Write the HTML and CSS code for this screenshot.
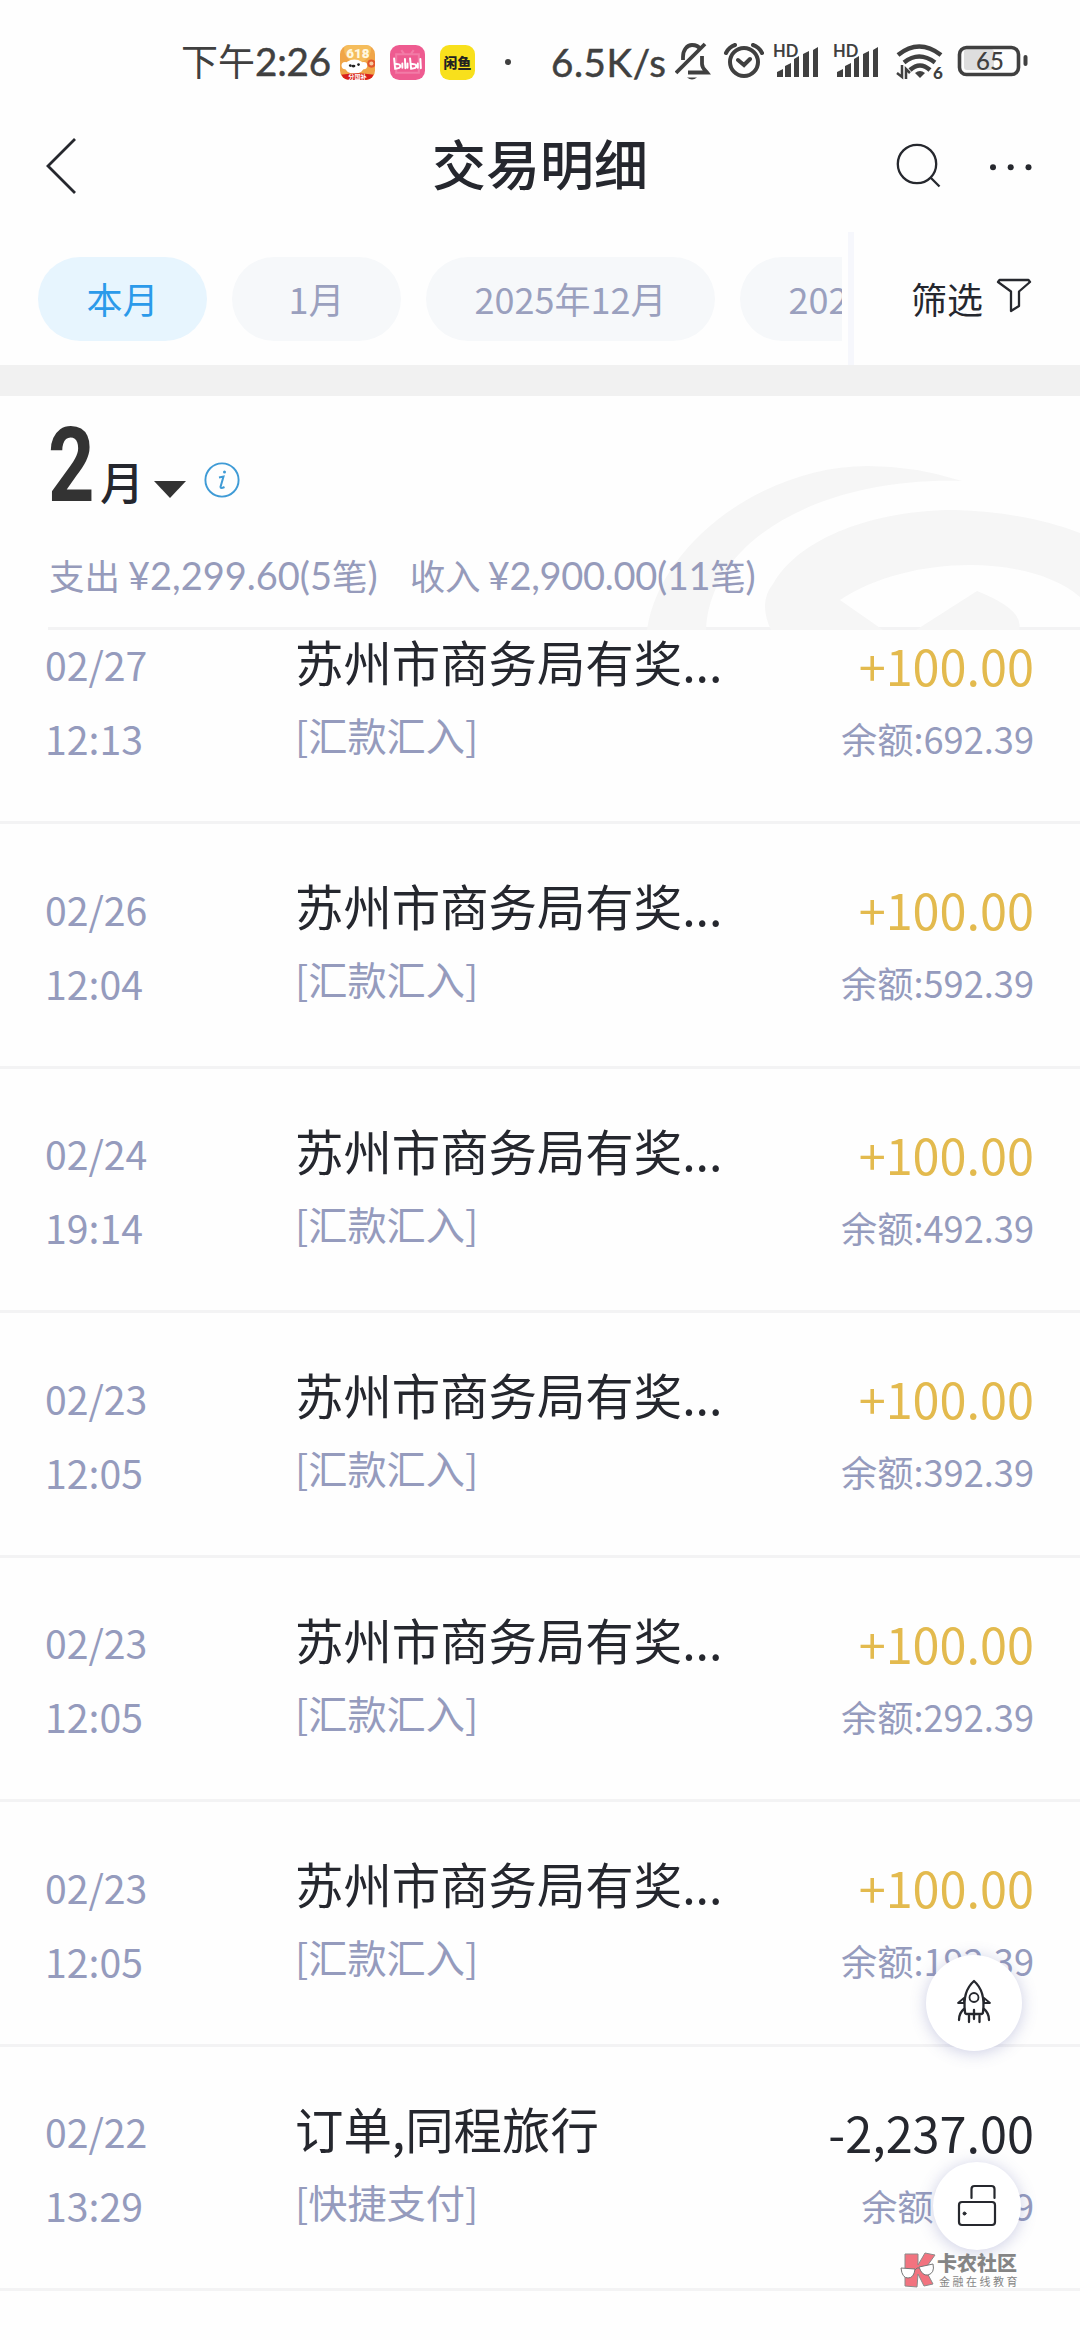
FILE: index.html
```html
<!DOCTYPE html>
<html lang="zh-CN">
<head>
<meta charset="utf-8">
<title>交易明细</title>
<link rel="stylesheet" href="styles.css">
</head>
<body>
<div class="screen">
  <div class="status">
    <span class="clock">下午<span class="clock-num">2:26</span></span>
    <svg class="app-icon" viewBox="0 0 34 34">
      <defs><clipPath id="r"><rect width="34" height="34" rx="9"/></clipPath></defs>
      <g clip-path="url(#r)">
        <rect width="34" height="34" fill="#f0a548"/>
        <circle cx="17" cy="4" r="13" fill="#f5bd5c"/>
        <text x="6" y="13" class="promo">618</text>
        <ellipse cx="14" cy="21" rx="9.500" ry="7" fill="#fff"/>
        <circle cx="5" cy="20" r="3.500" fill="#fff"/><circle cx="23" cy="20" r="3.500" fill="#fff"/>
        <circle cx="10" cy="20" r="1.300" fill="#222"/><circle cx="18" cy="19" r="1.300" fill="#222"/><ellipse cx="13" cy="20.500" rx="2" ry="1.300" fill="#222"/>
        <circle cx="30.500" cy="18" r="4" fill="#e2562c"/><circle cx="30.500" cy="18" r="2" fill="#f7c9a0"/>
        <path d="M1 29q16-3 32 0l-4 5H5z" fill="#d8201c"/>
        <text x="8" y="33.500" class="promo-sub">分国补</text>
      </g>
    </svg>
    <svg class="app-icon" viewBox="0 0 34 34">
      <rect width="34" height="34" rx="9" fill="#ee5b90"/>
      <path d="M11 5l3 4M23 5l-3 4M6 9h22v18H6z" fill="none" stroke="#f27ba6" stroke-width="2"/>
      <g fill="none" stroke="#fff" stroke-width="1.900" stroke-linecap="round">
        <path d="M4 13l1 10q5 0 5-2.500T5 18.500M12 18v4M14.500 13.500l.5 9M17 18v4M19.500 13l1 10q5 0 5-2.500t-5-2M27 18v4M29.500 13.500l.5 9"/>
      </g>
    </svg>
    <svg class="app-icon" viewBox="0 0 34 34">
      <rect width="34" height="34" rx="9" fill="#f8e01c"/>
      <text x="3.500" y="22.500" class="fish">闲鱼</text>
    </svg>
    <i class="dot"></i>
    <span class="speed">6.5K/s</span>
    <svg class="status-icons" viewBox="0 0 360 50" fill="none" stroke="#404040" stroke-width="4">
      <g stroke-width="3.800">
        <path d="M8 24v-3c0-7 4-12 9-12 4 0 7 2 8 4M27 20v8c0 4 3 6 5 8.500H13"/>
        <path d="M1 37L30 8"/>
        <path d="M12 41.500h10q-5 4-10 0z" fill="#404040" stroke="none"/>
      </g>
      <circle cx="69" cy="26" r="14"/><path d="M63 24l6 5 6-6M51 17q3-6 9-8M87 17q-3-6-9-8" stroke-linecap="round"/>
      <g fill="#404040" stroke="none">
        <text x="98" y="21" class="hd">HD</text>
        <path d="M102 41v-5l6-3v8zM110 41V30l6-3v14zM119 41V23l5-3v21zM128 41V18l6-3v26zM138 41V14l5-3v30z"/>
        <text x="158" y="21" class="hd">HD</text>
        <path d="M162 41v-5l6-3v8zM170 41V30l6-3v14zM179 41V23l5-3v21zM188 41V18l6-3v26zM198 41V14l5-3v30z"/>
      </g>
      <g stroke-width="4.500"><path d="M223 19q21-17 43 0M229 26.500q15-12 31 0M235 34q10-9 20 0"/></g>
      <path d="M240 37q5-4 10 0l-5 5z" fill="#404040" stroke="none"/>
      <path d="M222 37l5 4V29M235 37l-4-4v10" stroke-width="2.500"/>
      <text x="258" y="43" class="six">6</text>
      <rect x="289" y="13" width="30" height="21" rx="3" fill="#dedede" stroke="none"/>
      <rect x="284.500" y="11.500" width="59" height="27" rx="7" stroke-width="3.600"/>
      <path d="M350.500 21v7" stroke-width="4" stroke-linecap="round"/>
      <text x="301" y="34" class="batt">65</text>
    </svg>
  </div>

  <header class="nav">
    <svg class="back" viewBox="0 0 32 60"><path d="M30 3L3 30l27 27" fill="none" stroke="#26282e" stroke-width="2.800"/></svg>
    <h1>交易明细</h1>
    <svg class="nav-icons" viewBox="0 0 140 50" fill="none" stroke="#26282e" stroke-width="2.300"><circle cx="22" cy="23" r="19.200"/><path d="M36 37l8.500 8.500"/><g fill="#26282e" stroke="none"><circle cx="98" cy="26.300" r="3"/><circle cx="115.700" cy="26.300" r="3"/><circle cx="133.500" cy="26.300" r="3"/></g></svg>
  </header>

  <div class="months">
    <div class="pills">
      <span class="pill active">本月</span>
      <span class="pill">1月</span>
      <span class="pill wide">2025年12月</span>
      <span class="pill wide">2025年11月</span>
    </div>
    <div class="filter">筛选
      <svg viewBox="0 0 36 38"><path d="M3.500 3h29l1.500 2-11 9.500V29l-8 5V14.500L2 5z" fill="none" stroke="#26282e" stroke-width="2.300" stroke-linejoin="round"/></svg>
    </div>
  </div>
  <div class="band"></div>

  <section class="summary">
    <svg class="logo-bg" viewBox="0 0 440 170" fill="#f6f6f6">
      <path d="M7 168C20 80 125 4 228 4Q275 4 322 19C185 15 70 75 66 168z"/>
      <path d="M131 168Q118 140 133 122C160 75 235 48 315 48Q385 50 440 71V135C390 92 270 92 200 138L243 168zM276 168L337 129Q385 148 379 168z"/>
    </svg>
    <div class="month-head">
      <span class="big"><b>2</b></span><span class="unit">月</span>
      <svg class="caret" viewBox="0 0 32 17"><path d="M0 0h32L16 17z" fill="#333"/></svg>
      <svg class="info" viewBox="0 0 38 38"><circle cx="19" cy="19" r="16.600" fill="none" stroke="#3f9bd6" stroke-width="1.900"/><path d="M16 16.500l4.500-1-3 10.500q0 2 4 0" fill="none" stroke="#3f9bd6" stroke-width="2"/><circle cx="21.500" cy="11" r="1.500" fill="#3f9bd6"/></svg>
    </div>
    <div class="totals"><span>支出 <em>¥2,299.60(5</em>笔<em>)</em></span><span class="income">收入 <em>¥2,900.00(11</em>笔<em>)</em></span></div>
    <div class="rule"></div>
  </section>

  <main class="list">
    <article class="row"><div class="when"><span>02/27</span><span>12:13</span></div><div class="what"><b>苏州市商务局有奖...</b><span>[汇款汇入]</span></div><div class="sum"><b class="in">+100.00</b><span>余额:692.39</span></div></article>
    <article class="row"><div class="when"><span>02/26</span><span>12:04</span></div><div class="what"><b>苏州市商务局有奖...</b><span>[汇款汇入]</span></div><div class="sum"><b class="in">+100.00</b><span>余额:592.39</span></div></article>
    <article class="row"><div class="when"><span>02/24</span><span>19:14</span></div><div class="what"><b>苏州市商务局有奖...</b><span>[汇款汇入]</span></div><div class="sum"><b class="in">+100.00</b><span>余额:492.39</span></div></article>
    <article class="row"><div class="when"><span>02/23</span><span>12:05</span></div><div class="what"><b>苏州市商务局有奖...</b><span>[汇款汇入]</span></div><div class="sum"><b class="in">+100.00</b><span>余额:392.39</span></div></article>
    <article class="row"><div class="when"><span>02/23</span><span>12:05</span></div><div class="what"><b>苏州市商务局有奖...</b><span>[汇款汇入]</span></div><div class="sum"><b class="in">+100.00</b><span>余额:292.39</span></div></article>
    <article class="row"><div class="when"><span>02/23</span><span>12:05</span></div><div class="what"><b>苏州市商务局有奖...</b><span>[汇款汇入]</span></div><div class="sum"><b class="in">+100.00</b><span>余额:192.39</span></div></article>
    <article class="row"><div class="when"><span>02/22</span><span>13:29</span></div><div class="what"><b>订单,同程旅行</b><span>[快捷支付]</span></div><div class="sum"><b>-2,237.00</b><span>余额:92.39</span></div></article>
  </main>

  <div class="fab rocket">
    <svg viewBox="0 0 36 46" fill="none" stroke="#26282e" stroke-width="2.300" stroke-linejoin="round" stroke-linecap="round"><path d="M18 2C10 9 7 18 9 33q0 2 2 2h14q2 0 2-2C29 18 26 9 18 2z"/><circle cx="18" cy="18.500" r="4.500" stroke-width="1.800"/><path d="M8 19l-6 5h6zM28 19l6 5h-6z" stroke-width="1.800"/><path d="M8 30q-5 4-5 11M28 30q5 4 5 11M18 31v9M13 37v6M23.500 37v6"/></svg>
  </div>
  <div class="fab card">
    <svg viewBox="0 0 40 44" fill="none" stroke="#26282e" stroke-width="2.200" stroke-linecap="round"><rect x="2" y="19" width="36" height="23" rx="3"/><path d="M14.500 15V6q0-3 3-3h17q3 0 3 3v9"/><circle cx="7.500" cy="30.500" r="1.500" fill="#26282e" stroke-width="1"/></svg>
  </div>
  <div class="mark">
    <svg viewBox="0 0 36 38"><path d="M5 3h13v11l7-12 10 2-10 14 8 15-9 2-6-12-1 13-12-1z" fill="#f2737f" stroke="#8b8b8b" stroke-width="1"/><path d="M1 17l14 1q-1 9-7 9T1 17zM19 16l14-3q2 9-5 11-6 1-9-8z" fill="#fff" stroke="#777" stroke-width="1"/><path d="M15 19q2-3 4-2" fill="none" stroke="#777"/></svg>
    <div><b>卡农社区</b><span>金融在线教育</span></div>
  </div>
</div>
</body>
</html>
```
FILE: styles.css
```css
* { box-sizing: border-box; }
body { margin: 0; background: #fff; font-family: "Noto Sans CJK SC", sans-serif; color: #25272e; }
.screen { position: relative; width: 1080px; height: 2340px; overflow: hidden; background: #fefefe; }
svg { display: block; flex: none; }

.status { display: flex; align-items: center; height: 124px; padding-left: 181px; color: #404040; }
.clock { width: 159px; font-size: 37px; line-height: 50px; margin-top: -3px; white-space: nowrap; }
.clock-num { font-family: Lato, sans-serif; font-size: 38.500px; font-weight: 400; letter-spacing: -0.200px; -webkit-text-stroke: 0.500px #404040; }
.app-icon { width: 35px; height: 35px; margin-right: 15px; }
.promo { font: 900 13px Roboto, sans-serif; fill: #fff8e0; }
.promo-sub { font: 700 6px "Noto Sans CJK SC", sans-serif; fill: #fff; }
.fish { font: 900 13.500px "Noto Sans CJK SC", sans-serif; fill: #222; }
.dot { width: 6px; height: 6px; margin: 0 40px 0 15px; border-radius: 50%; background: #404040; }
.speed { width: 124px; font: 400 38.500px Lato, sans-serif; letter-spacing: 0.600px; -webkit-text-stroke: 0.500px #404040; white-space: nowrap; }
.status-icons { width: 360px; height: 50px; margin-top: -2px; }
.status-icons text { stroke: none; fill: #404040; }
.hd { font: 700 16.500px Lato, sans-serif; }
.six { font: 900 17px Lato, sans-serif; }
.batt { font: 500 24px Lato, sans-serif; }

.nav { display: flex; align-items: center; justify-content: space-between; height: 84px; padding: 0 45px; }
.back { width: 32px; height: 60px; }
.nav h1 { margin: -6px 0 0 108px; font-size: 54px; font-weight: 500; line-height: 84px; }
.nav-icons { width: 140px; height: 50px; margin-top: -1px; }

.months { display: flex; height: 157px; padding-top: 24px; }
.pills { display: flex; gap: 25px; width: 842px; padding: 25px 0 0 38px; overflow: hidden; }
.pill { flex: none; width: 169px; height: 84px; border-radius: 42px; background: #f6f8fa; color: #9aa0be; font-size: 36px; line-height: 83px; text-align: center; }
.pill.wide { width: 289px; }
.pill.active { background: #e7f5fe; color: #2b9aea; }
.filter { display: flex; align-items: center; gap: 13px; flex: 1; margin-left: 6px; padding: 0 0 2px 57px; border-left: 6px solid #f6f7fc; font-size: 36px; }
.filter svg { width: 36px; height: 38px; margin-top: -4px; }
.band { height: 31px; background: #f1f1f1; }

.summary { position: relative; height: 234px; }
.logo-bg { position: absolute; right: 0; bottom: -2px; width: 440px; height: 170px; }
.month-head { display: flex; height: 134px; padding-left: 48px; position: relative; }
.big { width: 52px; height: 134px; }
.big b { display: inline-block; font: 700 104px/140px Roboto, sans-serif; color: #333; transform: scaleX(0.780); transform-origin: 0 0; }
.unit { width: 54px; font-size: 44px; font-weight: 500; line-height: 170px; }
.caret { width: 32px; height: 17px; margin-top: 85px; }
.info { width: 38px; height: 38px; margin: 65px 0 0 17px; }
.totals { position: relative; display: flex; gap: 32px; height: 97px; padding-left: 49px; color: #969bbb; font-size: 35.500px; line-height: 90px; white-space: nowrap; }
.totals em { font-family: Lato, sans-serif; font-style: normal; font-size: 38px; }
.income { letter-spacing: -0.300px; }
.rule { height: 3px; margin-left: 48px; background: #f3f3f4; }

.list { height: 1710px; overflow: hidden; }
.row { display: flex; height: 244.500px; padding: 0 46px 0 45px; border-bottom: 3px solid #f3f3f4; }
.row:first-child { margin-top: -50.500px; }
.row span, .row b { display: block; font-weight: 400; white-space: nowrap; }
.when { width: 250px; padding-top: 47.500px; font-size: 39.200px; line-height: 74px; color: #959bbd; }
.what { flex: 1; padding-top: 45px; line-height: 73px; }
.what b { font-size: 48.400px; }
.what span { font-size: 39.200px; color: #959bbd; }
.sum { padding-top: 49px; line-height: 73px; text-align: right; }
.sum b { font-size: 48.600px; }
.sum .in { color: #e3ba4e; }
.sum span { font-size: 36.200px; color: #959bbd; }

.fab { position: absolute; display: flex; align-items: center; justify-content: center; border-radius: 50%; background: #fff; box-shadow: 0 2px 16px rgba(90, 95, 170, 0.300); }
.rocket { left: 926px; top: 1955px; width: 96px; height: 96px; }
.rocket svg { width: 36px; height: 46px; margin-top: -2px; }
.card { left: 933px; top: 2162px; width: 88px; height: 88px; }
.card svg { width: 40px; height: 44px; margin-top: -2px; }
.mark { position: absolute; left: 900px; top: 2251px; display: flex; gap: 1px; color: #858585; }
.mark svg { width: 36px; height: 38px; }
.mark b, .mark span { display: block; white-space: nowrap; }
.mark b { font-size: 20px; line-height: 24px; font-weight: 900; }
.mark span { padding-left: 2px; font-size: 11px; line-height: 12px; letter-spacing: 2.500px; }
```
